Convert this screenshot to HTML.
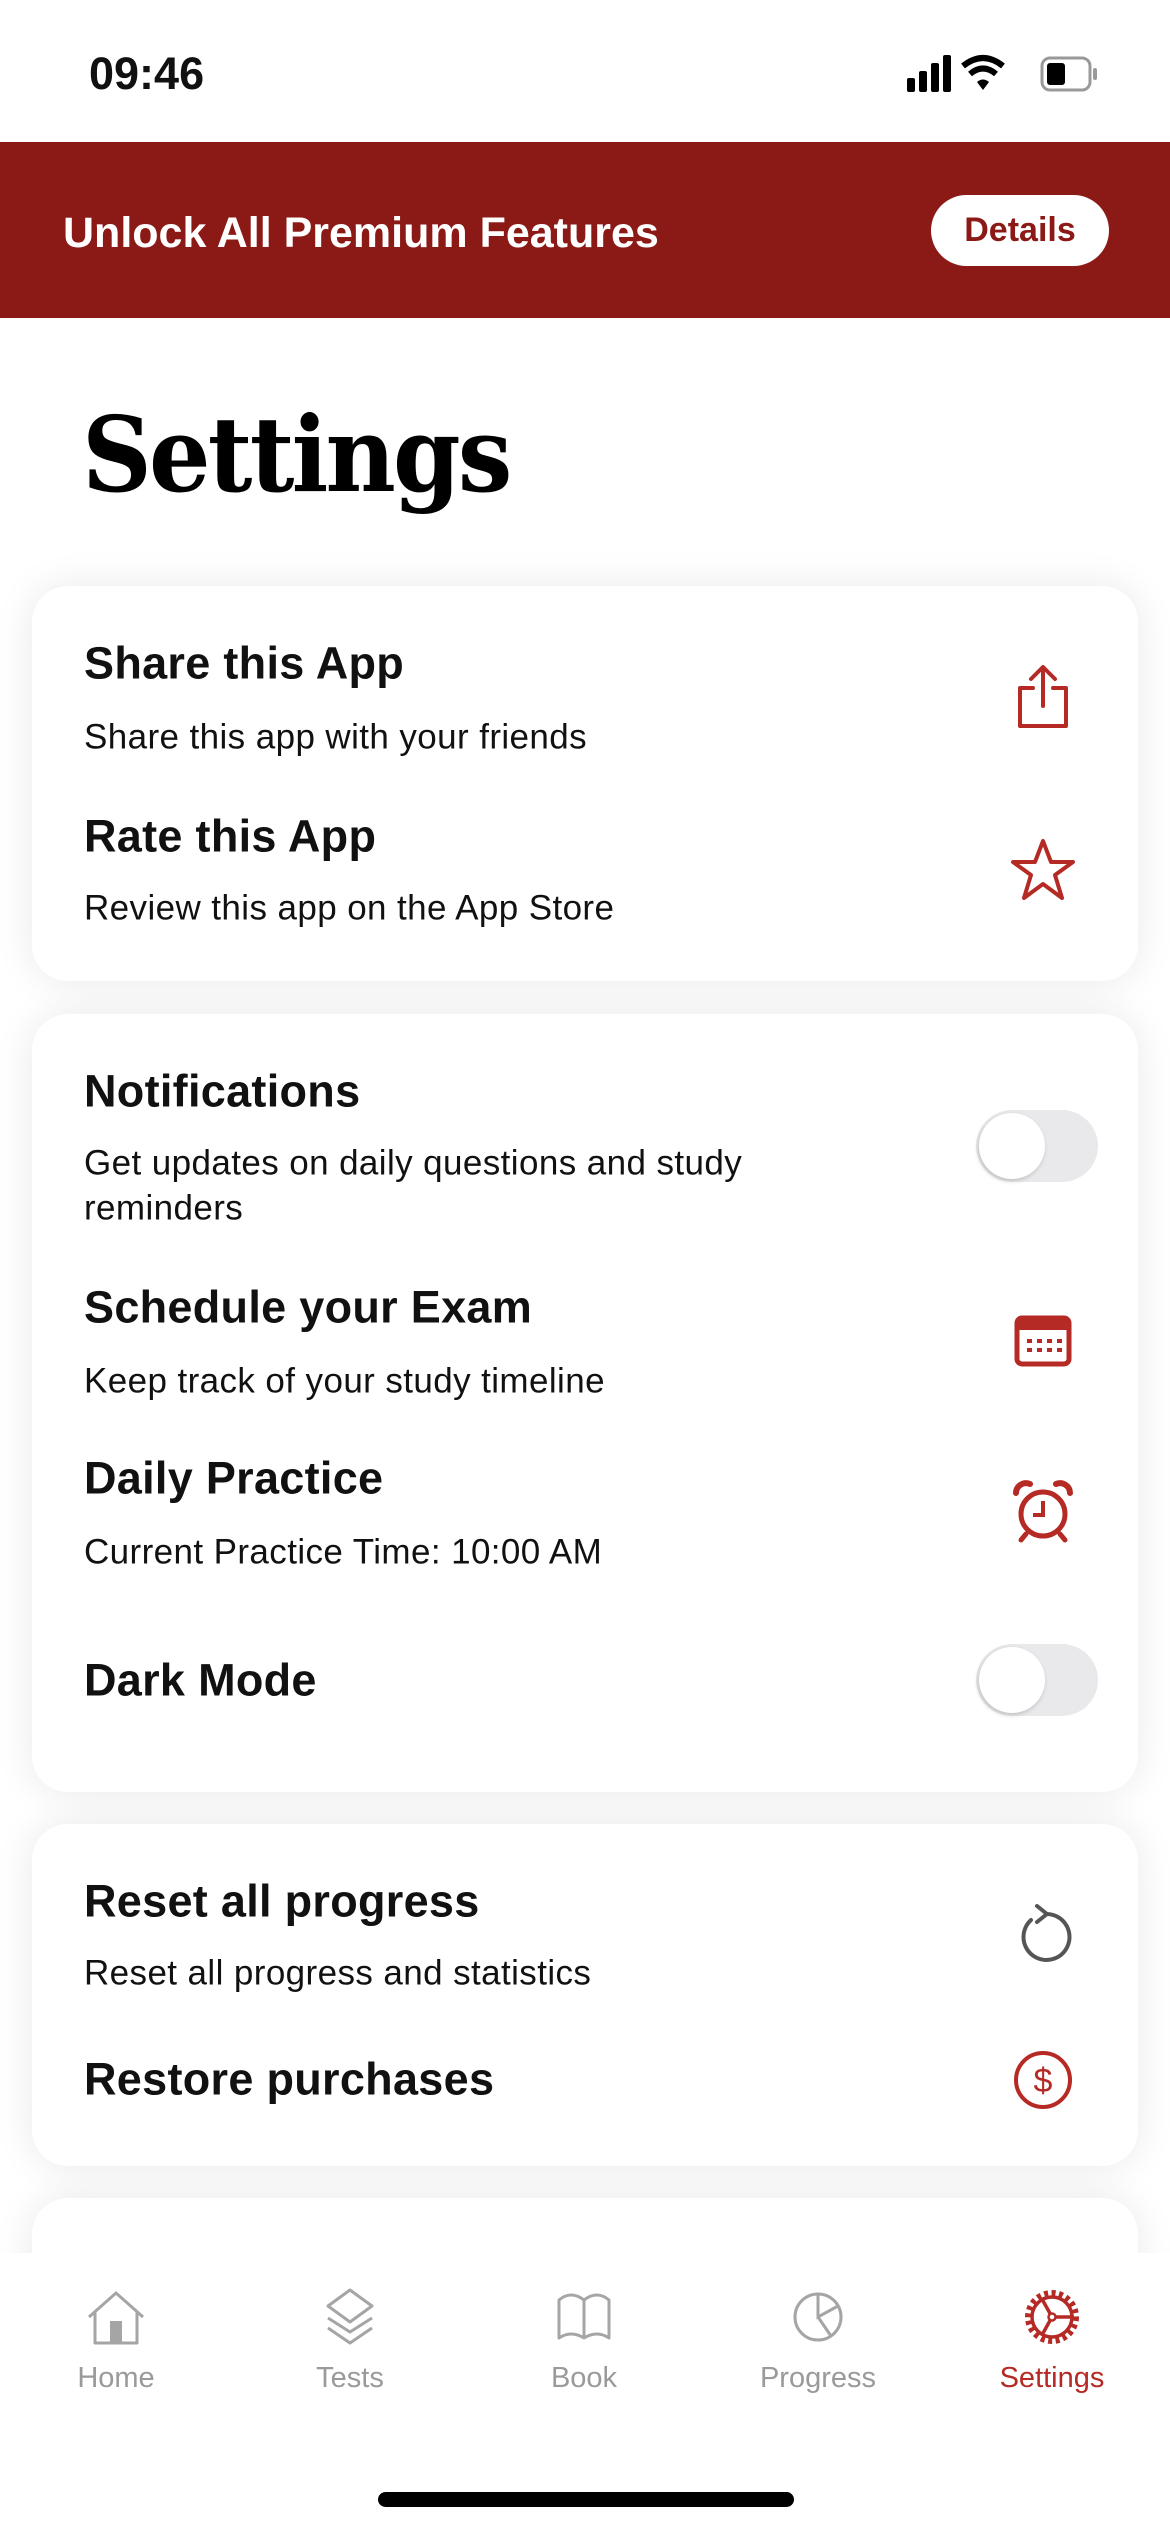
<!DOCTYPE html>
<html><head><meta charset="utf-8"><style>
*{margin:0;padding:0;box-sizing:border-box}
body{width:1170px;height:2532px;position:relative;background:#fff;font-family:"Liberation Sans",sans-serif;overflow:hidden;color:#111}
.a{position:absolute}
.card{position:absolute;left:32px;width:1106px;background:#fff;border-radius:36px;box-shadow:0 0 40px rgba(0,0,0,.09)}
.t{position:absolute;left:84px;font-size:45px;font-weight:700;line-height:1;color:#111;transform:translateY(-50%);letter-spacing:0.3px}
.s{position:absolute;left:84px;font-size:35px;line-height:1;color:#111;transform:translateY(-50%);letter-spacing:0.4px}
.ic{position:absolute;transform:translate(-50%,-50%)}
.tog{position:absolute;left:976px;width:122px;height:72px;border-radius:36px;background:#e9e9eb;transform:translateY(-50%)}
.tog:after{content:"";position:absolute;left:3px;top:3px;width:66px;height:66px;border-radius:50%;background:#fff;box-shadow:-1px 2px 5px rgba(0,0,0,.18)}
.tab{position:absolute;width:200px;text-align:center;font-size:29px;color:#9a9a9a;top:2362px}
</style></head><body>
<div class="a" style="left:89px;top:48px;font-size:45px;font-weight:700;">09:46</div>
<svg class="a" style="left:905px;top:52px" width="210" height="42" viewBox="0 0 210 42">
<rect x="2" y="26" width="8" height="14" rx="2" fill="#000"/><rect x="14" y="19" width="8" height="21" rx="2" fill="#000"/><rect x="26" y="11" width="8" height="29" rx="2" fill="#000"/><rect x="38" y="3" width="8" height="37" rx="2" fill="#000"/>
<path d="M58 14 Q78 -2 98 14" stroke="#000" stroke-width="6" fill="none"/><path d="M65 22 Q78 11 91 22" stroke="#000" stroke-width="6" fill="none"/><path d="M72 30 L78 38 L84 30 Q78 25 72 30Z" fill="#000"/>
<rect x="137" y="6" width="48" height="32" rx="8" fill="none" stroke="#999" stroke-width="3"/><rect x="142" y="11" width="18" height="22" rx="3" fill="#000"/><rect x="188" y="16" width="4" height="12" rx="2" fill="#999"/>
</svg>
<div class="a" style="left:0;top:142px;width:1170px;height:176px;background:#8b1a17"></div>
<div class="a" style="left:63px;top:209px;font-size:43px;font-weight:700;color:#fff;">Unlock All Premium Features</div>
<div class="a" style="left:931px;top:195px;width:178px;height:71px;border-radius:36px;background:#fff;color:#8b1a17;font-size:34px;font-weight:700;text-align:center;line-height:71px">Details</div>
<div class="a" style="left:82px;top:393px;font-family:'DejaVu Serif','Liberation Serif',serif;font-weight:700;font-size:104px;letter-spacing:-3px;transform:scaleX(.93);transform-origin:left;color:#000">Settings</div>

<div class="card" style="top:586px;height:395px"></div>
<div class="t" style="top:663px">Share this App</div>
<div class="s" style="top:737px">Share this app with your friends</div>
<div class="t" style="top:836px">Rate this App</div>
<div class="s" style="top:908px">Review this app on the App Store</div>
<svg class="ic" style="left:1043px;top:697px" width="60" height="66" viewBox="0 0 60 66"><path d="M20 24H7v38h46V24H40M30 42V4M18 15L30 3 42 15" stroke="#b52a24" stroke-width="4" fill="none" stroke-linejoin="round" stroke-linecap="round"/></svg>
<svg class="ic" style="left:1043px;top:870px" width="66" height="64" viewBox="0 0 66 64"><path d="M33 3l8 21h22L45 37l7 23-19-14-19 14 7-23L3 24h22z" stroke="#b52a24" stroke-width="4" fill="none" stroke-linejoin="round"/></svg>

<div class="card" style="top:1014px;height:778px"></div>
<div class="t" style="top:1091px">Notifications</div>
<div class="s" style="top:1163px">Get updates on daily questions and study</div>
<div class="s" style="top:1208px">reminders</div>
<div class="tog" style="top:1146px"></div>
<div class="t" style="top:1307px">Schedule your Exam</div>
<div class="s" style="top:1381px">Keep track of your study timeline</div>
<svg class="ic" style="left:1043px;top:1341px" width="58" height="52" viewBox="0 0 58 52"><rect x="3" y="3" width="52" height="46" rx="5" fill="none" stroke="#b52a24" stroke-width="5"/><rect x="3" y="3" width="52" height="12" fill="#b52a24"/><g fill="#b52a24"><rect x="13" y="24" width="5" height="4"/><rect x="23" y="24" width="5" height="4"/><rect x="33" y="24" width="5" height="4"/><rect x="43" y="24" width="5" height="4"/><rect x="13" y="33" width="5" height="4"/><rect x="23" y="33" width="5" height="4"/><rect x="33" y="33" width="5" height="4"/><rect x="43" y="33" width="5" height="4"/></g></svg>
<div class="t" style="top:1478px">Daily Practice</div>
<div class="s" style="top:1552px">Current Practice Time: 10:00 AM</div>
<svg class="ic" style="left:1043px;top:1511px" width="64" height="64" viewBox="0 0 64 64"><circle cx="32" cy="35" r="22" fill="none" stroke="#b52a24" stroke-width="5"/><path d="M32 22v14H22" stroke="#b52a24" stroke-width="4" fill="none"/><path d="M5 14a10 10 0 0 1 14-9M59 14a10 10 0 0 0-14-9" stroke="#b52a24" stroke-width="6" fill="none" stroke-linecap="round"/><path d="M15 55l-5 6M49 55l5 6" stroke="#b52a24" stroke-width="5" stroke-linecap="round"/></svg>
<div class="t" style="top:1680px">Dark Mode</div>
<div class="tog" style="top:1680px"></div>

<div class="card" style="top:1824px;height:342px"></div>
<div class="t" style="top:1901px">Reset all progress</div>
<div class="s" style="top:1973px">Reset all progress and statistics</div>
<svg class="ic" style="left:1043px;top:1934px" width="60" height="64" viewBox="0 0 60 64"><path d="M18 18A23 23 0 1 0 34 12" stroke="#555" stroke-width="4" fill="none" stroke-linecap="round"/><path d="M24 4l10 8-10 8" stroke="#555" stroke-width="4" fill="none" stroke-linecap="round" stroke-linejoin="round"/></svg>
<div class="t" style="top:2079px">Restore purchases</div>
<svg class="ic" style="left:1043px;top:2080px" width="62" height="62" viewBox="0 0 62 62"><circle cx="31" cy="31" r="27" fill="none" stroke="#b52a24" stroke-width="4"/><text x="31" y="43" text-anchor="middle" font-family="Liberation Sans" font-size="34" fill="#b52a24">$</text></svg>

<div class="card" style="top:2198px;height:200px"></div>
<div class="a" style="left:0;top:2253px;width:1170px;height:279px;background:#fff"></div>

<svg class="ic" style="left:116px;top:2318px" width="58" height="54" viewBox="0 0 58 54"><path d="M2 26L29 2 56 26M8 20v32h42V20" stroke="#a5a5a5" stroke-width="3" fill="none" stroke-linejoin="round"/><rect x="23" y="30" width="12" height="22" fill="#a5a5a5"/></svg>
<svg class="ic" style="left:350px;top:2317px" width="52" height="58" viewBox="0 0 52 58"><path d="M26 2l22 16-22 16L4 18z M4 30l22 14 22-14 M4 40l22 15 22-15" stroke="#a5a5a5" stroke-width="3" fill="none" stroke-linejoin="round"/></svg>
<svg class="ic" style="left:584px;top:2317px" width="56" height="50" viewBox="0 0 56 50"><path d="M3 46V8q12-10 25 0 13-10 25 0v38q-12-8-25 0-13-8-25 0zM28 8v38" stroke="#a5a5a5" stroke-width="3" fill="none" stroke-linejoin="round"/></svg>
<svg class="ic" style="left:818px;top:2317px" width="52" height="52" viewBox="0 0 52 52"><circle cx="26" cy="26" r="23" fill="none" stroke="#a5a5a5" stroke-width="3"/><path d="M26 3v23l20-11M26 26l13 19" stroke="#a5a5a5" stroke-width="3" fill="none"/></svg>
<svg class="ic" style="left:1052px;top:2317px" width="58" height="58" viewBox="0 0 58 58"><circle cx="29" cy="29" r="24" fill="none" stroke="#b52a24" stroke-width="6" stroke-dasharray="4 3.5"/><circle cx="29" cy="29" r="20" fill="none" stroke="#b52a24" stroke-width="3.5"/><path d="M29 29L19 11M29 29L19 47M29 29h22" stroke="#b52a24" stroke-width="3.5"/><circle cx="29" cy="29" r="3.5" fill="#fff" stroke="#b52a24" stroke-width="2.5"/></svg>
<div class="tab" style="left:16px">Home</div>
<div class="tab" style="left:250px">Tests</div>
<div class="tab" style="left:484px">Book</div>
<div class="tab" style="left:718px">Progress</div>
<div class="tab" style="left:952px;color:#b52a24">Settings</div>
<div class="a" style="left:378px;top:2492px;width:416px;height:15px;border-radius:8px;background:#000"></div>
</body></html>
